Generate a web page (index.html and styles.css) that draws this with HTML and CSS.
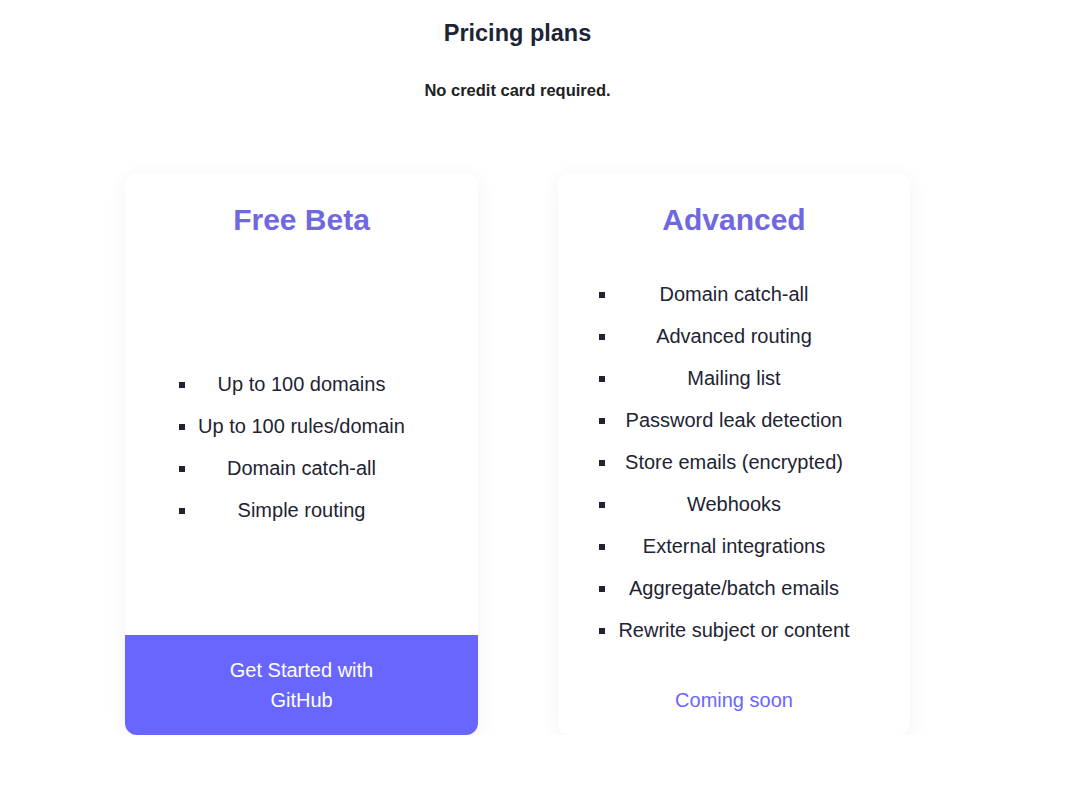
FILE: index.html
```html
<!DOCTYPE html>
<html>
<head>
	<title>Pricing plans</title>

	<link rel="stylesheet" href="styles.css">
</head>
<body>

	<main class="page">
		<h1 class="page-title">Pricing plans</h1>
		<p class="page-note">No credit card required.</p>

		<div class="plans">
			<div class="plan">
				<h2 class="plan-name">Free Beta</h2>
				<div class="plan-body">
					<ul class="plan-features">
						<li>Up to 100 domains</li>
						<li>Up to 100 rules/domain</li>
						<li>Domain catch-all</li>
						<li>Simple routing</li>
					</ul>
				</div>
				<a class="plan-action plan-action-primary" href="#">Get Started with GitHub</a>
			</div>

			<div class="plan">
				<h2 class="plan-name">Advanced</h2>
				<div class="plan-body">
					<ul class="plan-features">
						<li>Domain catch-all</li>
						<li>Advanced routing</li>
						<li>Mailing list</li>
						<li>Password leak detection</li>
						<li>Store emails (encrypted)</li>
						<li>Webhooks</li>
						<li>External integrations</li>
						<li>Aggregate/batch emails</li>
						<li>Rewrite subject or content</li>
					</ul>
				</div>
				<span class="plan-action plan-action-muted">Coming soon</span>
			</div>
		</div>
	</main>

</body>
</html>
```

FILE: styles.css
```css
body {
	margin: 0;
	background: #fff;
	font-family: "Liberation Sans", Arial, sans-serif;
	color: #1e2433;
}

.page {
	width: 1035px;
	text-align: center;
}

.page-title {
	margin: 15px 0 0;
	font-size: 23.5px;
	line-height: 36px;
	color: #1c2536;
}

.page-note {
	margin: 27px 0 0;
	font-size: 16.5px;
	line-height: 24px;
	font-weight: bold;
	color: #222;
}

.plans {
	display: grid;
	grid-template-columns: 353px 352px;
	column-gap: 80px;
	justify-content: center;
	margin-top: 71px;
}

.plan {
	display: flex;
	flex-direction: column;
	background: #fff;
	border-radius: 12px;
	overflow: hidden;
	box-shadow: 0 4px 20px rgba(0, 0, 0, 0.06);
}

.plan-name {
	margin: 29px 0 33px;
	font-size: 30px;
	line-height: 36px;
	color: #7068e0;
}

.plan-body {
	flex: 1;
	display: flex;
	align-items: center;
	justify-content: center;
}

.plan-features {
	width: fit-content;
	margin: 8px auto;
	padding: 0;
	list-style: square outside;
	font-size: 20px;
	line-height: 30px;
}

.plan-features li {
	margin-bottom: 12px;
	text-align: center;
}

.plan-action {
	display: block;
	padding: 20px 90px;
	font-size: 20px;
	line-height: 30px;
	text-decoration: none;
}

.plan-action-primary {
	background: #6966ff;
	color: #fff;
}

.plan-action-muted {
	color: #6966ff;
}
```
